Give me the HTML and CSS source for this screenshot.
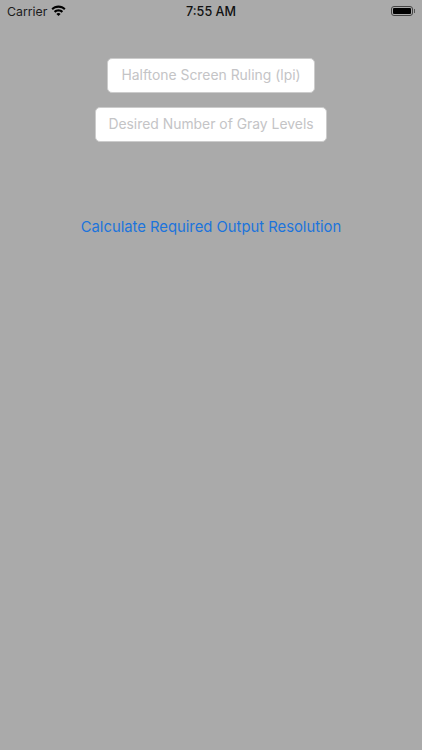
FILE: index.html
```html
<!DOCTYPE html>
<html>
<head>
    <title>Output Resolution</title>
    <link rel="stylesheet" href="styles.css">
</head>
<body>
    <div class="status-bar">
        <div class="status-left">
            <span class="carrier">Carrier</span>
            <svg class="wifi" width="15" height="11" viewBox="0 0 16 12">
                <path d="M8 .6c3 0 5.700 1.200 7.700 3.100l-1.600 1.700C12.500 3.900 10.400 3 8 3S3.500 3.900 1.900 5.400L.3 3.700C2.300 1.800 5 .6 8 .6z" fill="#000"/>
                <path d="M8 4.700c1.900 0 3.700.800 5 2.100l-1.600 1.600C10.500 7.500 9.300 7 8 7s-2.500.500-3.400 1.400L3 6.800c1.300-1.300 3.100-2.100 5-2.100z" fill="#000"/>
                <path d="M8 8.800c.900 0 1.700.300 2.300.900L8 12 5.700 9.700c.600-.600 1.400-.900 2.300-.900z" fill="#000"/>
            </svg>
        </div>
        <span class="clock">7:55 AM</span>
        <div class="status-right">
            <div class="battery"><div class="battery-level"></div></div>
            <div class="battery-cap"></div>
        </div>
    </div>

    <div class="form">
        <div class="field field-ruling">Halftone Screen Ruling (lpi)</div>
        <div class="field field-levels">Desired Number of Gray Levels</div>
        <a class="calculate" href="#">Calculate Required Output Resolution</a>
    </div>
</body>
</html>
```

FILE: styles.css
```css
html, body {
    height: 100%;
}

body {
    margin: 0;
    background-color: #aaaaaa;
    font-family: Inter, "Liberation Sans", Arial, sans-serif;
    overflow: hidden;
}

.status-bar {
    height: 22px;
    display: grid;
    grid-template-columns: 1fr auto 1fr;
    align-items: center;
    padding: 0 7px;
    color: #000;
}

.status-left {
    display: flex;
    align-items: center;
    gap: 4px;
}

.carrier {
    font-size: 12.3px;
    color: #1c1c1c;
}

.wifi {
    margin-top: -2px;
}

.clock {
    font-size: 12.6px;
    font-weight: 500;
    color: #111;
}

.status-right {
    display: flex;
    align-items: center;
    justify-content: flex-end;
    gap: 1px;
}

.battery {
    width: 22px;
    height: 10px;
    box-sizing: border-box;
    border: 1px solid #444;
    border-radius: 3px;
    padding: 1px;
}

.battery-level {
    height: 100%;
    background-color: #000;
    border-radius: 1px;
}

.battery-cap {
    width: 1px;
    height: 4px;
    background-color: #555;
}

.form {
    display: flex;
    flex-direction: column;
    align-items: center;
    padding-top: 36px;
}

.field {
    height: 34.5px;
    box-sizing: border-box;
    display: flex;
    align-items: center;
    justify-content: center;
    padding-bottom: 1px;
    background-color: #fff;
    border: 1px solid #ccc;
    border-radius: 5px;
    font-size: 13.9px;
    color: #c4c4c6;
}

.field-ruling {
    width: 208px;
}

.field-levels {
    width: 232px;
    margin-top: 14.5px;
}

.calculate {
    margin-top: 74.5px;
    font-size: 14.8px;
    line-height: 22px;
    color: #1c74dc;
    text-decoration: none;
}
```
